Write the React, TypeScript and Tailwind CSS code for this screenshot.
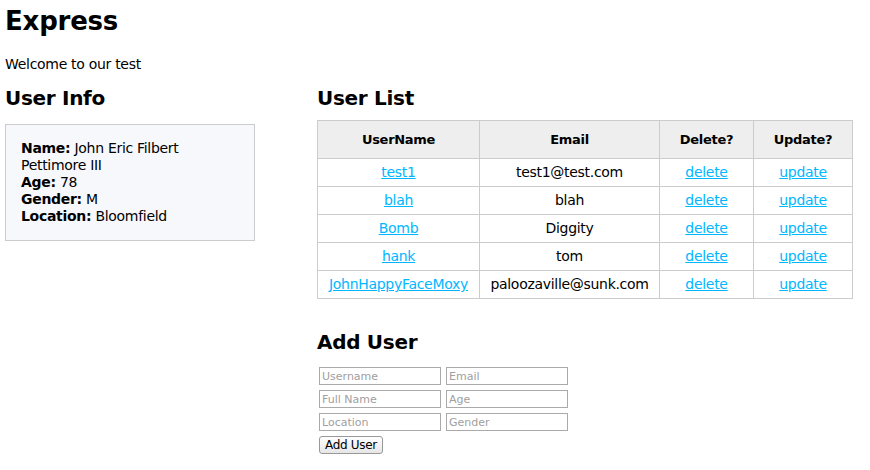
import React from "react";

const users = [
  { username: "test1", email: "test1@test.com" },
  { username: "blah", email: "blah" },
  { username: "Bomb", email: "Diggity" },
  { username: "hank", email: "tom" },
  { username: "JohnHappyFaceMoxy", email: "paloozaville@sunk.com" },
];

const font = { fontFamily: '"DejaVu Sans", "Liberation Sans", sans-serif' };

export default function App() {
  return (
    <div className="min-h-[470px] bg-white px-[5px] pt-[4px] text-[14px] tracking-[-0.3px] text-black font-['DejaVu_Sans',sans-serif]">
      <h1 className="text-[26px] font-bold leading-[34px] tracking-[-0.2px]">Express</h1>
      <p className="mt-[17px] leading-[18px]">Welcome to our test</p>

      <div className="mt-[13px] flex">
        {/* left column */}
        <div className="w-[250px] shrink-0">
          <h2 className="text-[20px] font-bold leading-[24px] tracking-[-0.3px]">User Info</h2>
          <div className="mt-[14px] h-[117px] border border-[#cccccc] bg-[#f7f8fc] pl-[15px] pt-[15px] leading-[17px]">
            <div>
              <b>Name:</b> John Eric Filbert
              <br />
              Pettimore III
            </div>
            <div>
              <b>Age:</b> 78
            </div>
            <div>
              <b>Gender:</b> M
            </div>
            <div>
              <b>Location:</b> Bloomfield
            </div>
          </div>
        </div>

        {/* right column */}
        <div className="ml-[62px] w-[536px]">
          <h2 className="text-[20px] font-bold leading-[24px] tracking-[-0.3px]">User List</h2>
          <table className="mt-[10px] w-[536px] border-collapse text-center">
            <thead>
              <tr className="h-[38px] bg-[#eeeeee] text-[13px]">
                <th className="w-[162px] border border-[#cccccc] font-bold">UserName</th>
                <th className="w-[180px] border border-[#cccccc] font-bold">Email</th>
                <th className="w-[94px] border border-[#cccccc] font-bold">Delete?</th>
                <th className="border border-[#cccccc] font-bold">Update?</th>
              </tr>
            </thead>
            <tbody>
              {users.map((u) => (
                <tr key={u.username} className="h-[28px]">
                  <td className="border border-[#cccccc]">
                    <a href="#" className="text-[#00b7ff] underline">
                      {u.username}
                    </a>
                  </td>
                  <td className="border border-[#cccccc]">{u.email}</td>
                  <td className="border border-[#cccccc]">
                    <a href="#" className="text-[#00b7ff] underline">
                      delete
                    </a>
                  </td>
                  <td className="border border-[#cccccc]">
                    <a href="#" className="text-[#00b7ff] underline">
                      update
                    </a>
                  </td>
                </tr>
              ))}
            </tbody>
          </table>

          <h2 className="mt-[31px] text-[20px] font-bold leading-[24px] tracking-[-0.3px]">Add User</h2>
          <form className="mt-[13px] pl-[2px]" onSubmit={(e) => e.preventDefault()}>
            <div className="grid w-[250px] grid-cols-[122px_122px] gap-x-[5px] gap-y-[5px]">
              {["Username", "Email", "Full Name", "Age", "Location", "Gender"].map((p) => (
                <input
                  key={p}
                  placeholder={p}
                  className="h-[18px] border border-[#aaaaaa] bg-white px-[2px] text-[11px] leading-[16px] tracking-normal placeholder:text-[#a0a0a0]"
                  style={font}
                />
              ))}
            </div>
            <button
              className="mt-[5px] h-[18px] w-[64px] rounded-[3px] border border-[#999999] bg-gradient-to-b from-white to-[#e6e6e6] text-[12px] leading-[16px] tracking-[-0.3px]"
              style={font}
            >
              Add User
            </button>
          </form>
        </div>
      </div>
    </div>
  );
}
